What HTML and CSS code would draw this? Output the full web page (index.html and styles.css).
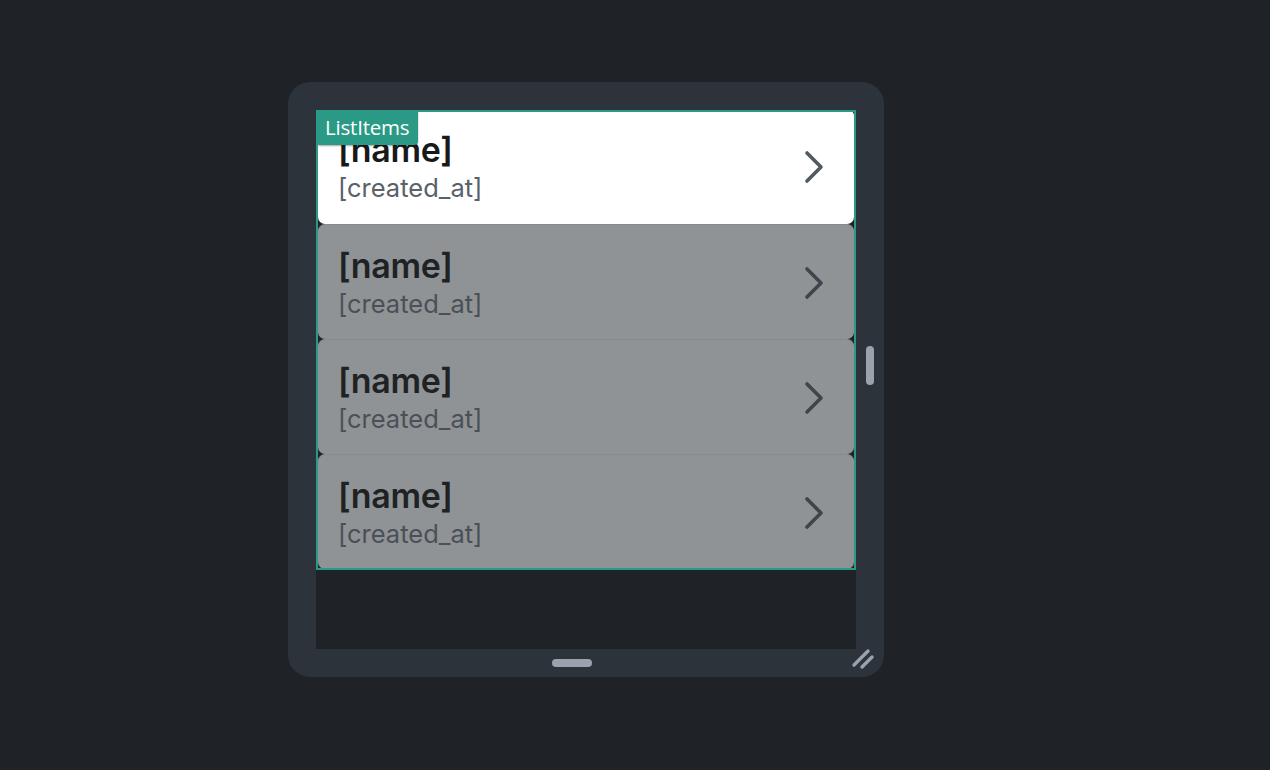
FILE: index.html
```html
<!DOCTYPE html>
<html lang="en">
<head>
  <meta charset="UTF-8">
  <meta name="viewport" content="width=device-width, initial-scale=1.0">
  <title>ListItems preview</title>
  <link rel="stylesheet" href="styles.css">
</head>
<body>
  <div class="device">
    <div class="screen-row">
      <div class="screen">
        <div class="selection">
          <span class="tag">ListItems</span>
          <div class="list">
            <div class="item">
              <div class="texts">
                <div class="name">[name]</div>
                <div class="date">[created_at]</div>
              </div>
              <svg class="chevron" width="24" height="36" viewBox="0 0 24 36"><path d="M5 4 L19 18 L5 32" /></svg>
            </div>
            <div class="item dim">
              <div class="texts">
                <div class="name">[name]</div>
                <div class="date">[created_at]</div>
              </div>
              <svg class="chevron" width="24" height="36" viewBox="0 0 24 36"><path d="M5 4 L19 18 L5 32" /></svg>
            </div>
            <div class="item dim">
              <div class="texts">
                <div class="name">[name]</div>
                <div class="date">[created_at]</div>
              </div>
              <svg class="chevron" width="24" height="36" viewBox="0 0 24 36"><path d="M5 4 L19 18 L5 32" /></svg>
            </div>
            <div class="item dim">
              <div class="texts">
                <div class="name">[name]</div>
                <div class="date">[created_at]</div>
              </div>
              <svg class="chevron" width="24" height="36" viewBox="0 0 24 36"><path d="M5 4 L19 18 L5 32" /></svg>
            </div>
          </div>
        </div>
      </div>
      <div class="gutter">
        <div class="thumb"></div>
      </div>
    </div>
    <div class="bottom-bar">
      <div class="handle"></div>
      <svg class="resize" width="24" height="24" viewBox="0 0 24 24">
        <path d="M3 19 L17 5" />
        <path d="M11 21 L21 11" />
      </svg>
    </div>
  </div>
</body>
</html>
```

FILE: styles.css
```css
body {
  margin: 0;
  background: #1f2327;
  font-family: Inter, 'Noto Sans', sans-serif;
  height: 770px;
  overflow: hidden;
}

.device {
  margin: 82px 0 0 288px;
  width: 596px;
  height: 595px;
  background: #2c333b;
  border-radius: 22px;
  padding: 28px 0 0 28px;
  box-sizing: border-box;
  display: flex;
  flex-direction: column;
}

.screen-row {
  display: flex;
  height: 539px;
}

.screen {
  width: 540px;
  height: 539px;
  background: #1f2327;
}

.gutter {
  flex: 1;
  display: flex;
  justify-content: center;
  align-items: flex-start;
  padding-top: 236px;
}

.thumb {
  width: 8px;
  height: 39px;
  border-radius: 4px;
  background: #9aa3ad;
}

.selection {
  position: relative;
  border: 2px solid #2a9a86;
  height: 456px;
  overflow: hidden;
}

.tag {
  position: absolute;
  left: -1px;
  top: -2px;
  z-index: 2;
  background: #2a9a86;
  color: #ffffff;
  font-family: 'Open Sans', Inter, sans-serif;
  font-size: 20.5px;
  font-weight: 500;
  letter-spacing: -0.2px;
  line-height: 35px;
  padding: 0 9px 0 8px;
  border-radius: 2px 2px 4px 3px;
  box-shadow: 0 1px 2px rgba(0, 0, 0, 0.35);
}

.list {
  margin-top: -3px;
}

.item {
  height: 115px;
  box-sizing: border-box;
  padding: 19px 28px 0 20px;
  background: #ffffff;
  border-radius: 7px;
  display: flex;
  justify-content: space-between;
  align-items: flex-start;
}

.item.dim {
  background: #8f9395;
  border-top: 1px solid #878b8d;
}

.name {
  font-size: 34px;
  font-weight: 600;
  line-height: 44px;
  color: #17191b;
  letter-spacing: -0.3px;
}

.date {
  font-size: 25.5px;
  line-height: 31px;
  color: #5a6169;
}

.dim .name {
  color: #1f2225;
}

.dim .date {
  color: #4a5057;
}

.chevron {
  margin-top: 21px;
}

.chevron path {
  fill: none;
  stroke: #515963;
  stroke-width: 3.6;
  stroke-linecap: round;
  stroke-linejoin: round;
}

.dim .chevron path {
  stroke: #3f454c;
}

.bottom-bar {
  flex: 1;
  position: relative;
  margin-left: -28px;
  display: flex;
  justify-content: center;
  align-items: center;
}

.handle {
  width: 40px;
  height: 8px;
  border-radius: 4px;
  background: #9aa3ad;
  margin-left: -28px;
}

.resize {
  position: absolute;
  right: 9px;
  top: -3px;
}

.resize path {
  stroke: #9aa3ad;
  stroke-width: 3.4;
  stroke-linecap: round;
}
```
